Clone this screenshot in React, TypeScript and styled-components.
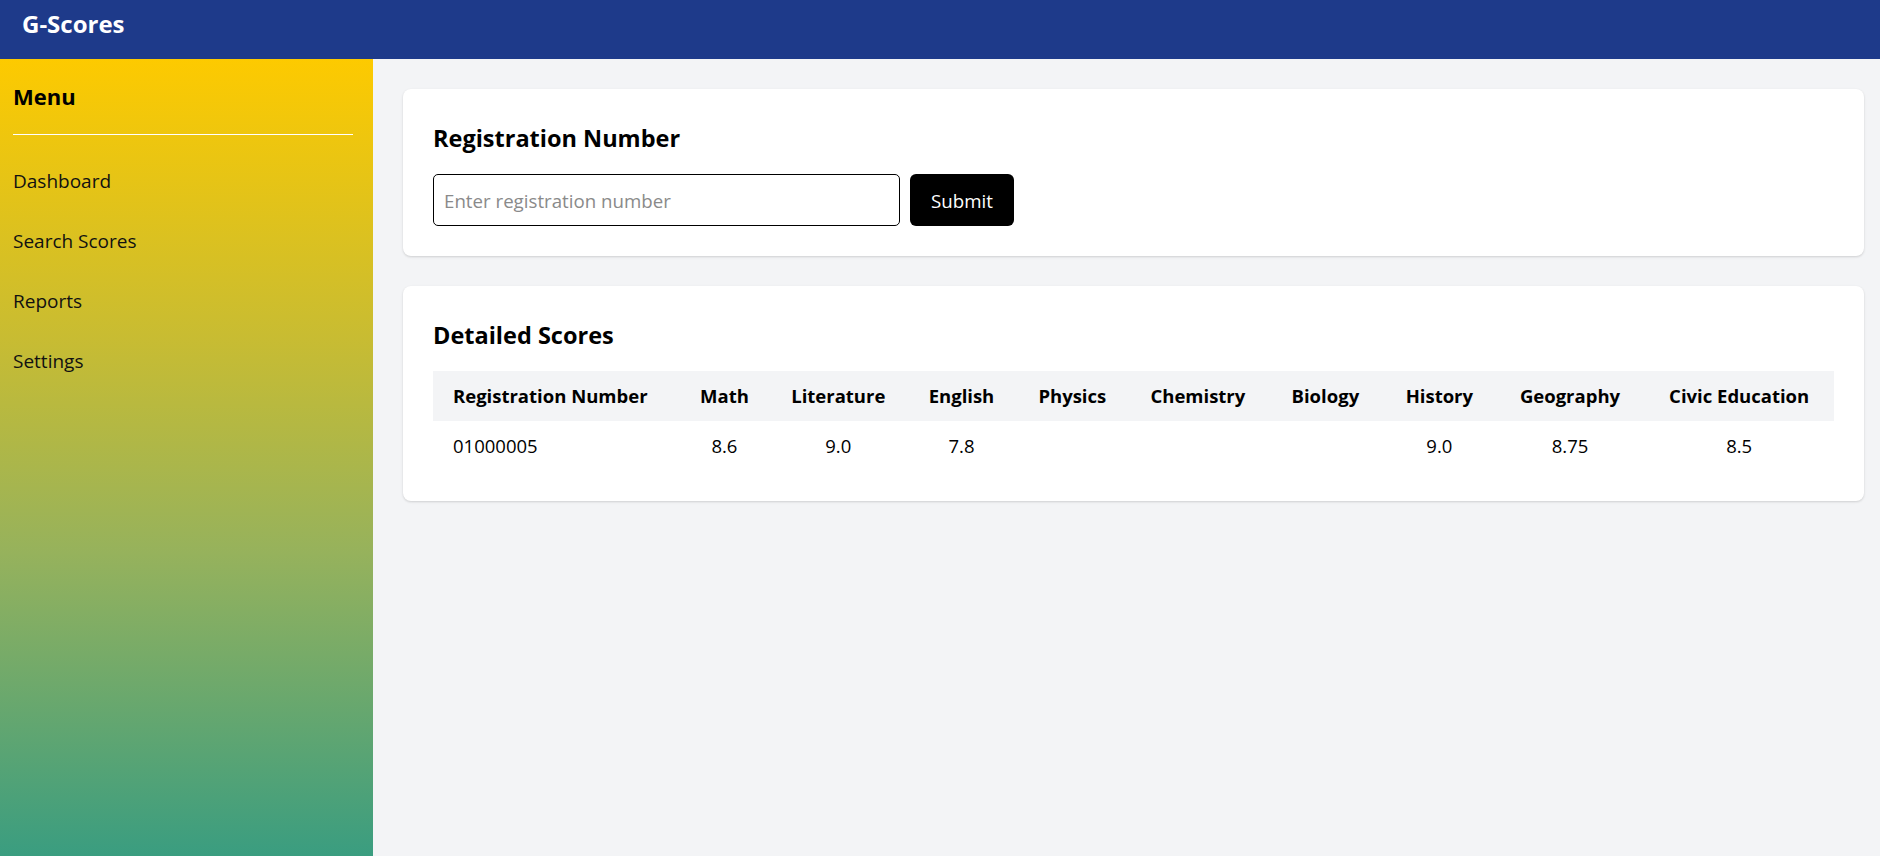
import React from "react";
import styled, { createGlobalStyle } from "styled-components";

const GlobalStyle = createGlobalStyle`
  *, *::before, *::after { box-sizing: border-box; }
  html, body { margin: 0; padding: 0; }
  body {
    font-family: "Open Sans", "Noto Sans", sans-serif;
    color: #000;
    background: #f3f4f6;
  }
`;

const Shell = styled.div`
  display: flex;
  flex-direction: column;
  min-height: 100vh;
`;

const TopBar = styled.header`
  height: 59px;
  flex-shrink: 0;
  background: #1e3a8a;
  padding: 6px 22px 0;
`;

const Brand = styled.h1`
  margin: 0;
  font-size: 24px;
  line-height: 35px;
  font-weight: 700;
  color: #fff;
`;

const Body = styled.div`
  flex: 1;
  display: flex;
`;

const Sidebar = styled.aside`
  width: 373px;
  flex-shrink: 0;
  background: linear-gradient(
    180deg,
    #fdca00 0%,
    rgb(200, 188, 50) 35%,
    rgb(150, 178, 92) 62%,
    #3a9d80 100%
  );
  padding: 20px 20px 20px 13px;
`;

const MenuTitle = styled.h2`
  margin: 0;
  font-size: 22px;
  line-height: 35px;
  font-weight: 700;
`;

const Divider = styled.hr`
  border: none;
  border-top: 1px solid #fff;
  height: 0;
  margin: 20px 0 16px;
`;

const NavList = styled.ul`
  list-style: none;
  margin: 0;
  padding: 0;
`;

const NavItem = styled.li`
  font-size: 19px;
  line-height: 30px;
  padding: 15px 0;
  color: #111;
  cursor: pointer;
`;

const Main = styled.main`
  flex: 1;
  display: flex;
  flex-direction: column;
  gap: 30px;
  padding: 30px 16px 30px 30px;
`;

const Card = styled.section`
  background: #fff;
  border-radius: 8px;
  box-shadow: 0 1px 3px rgba(0, 0, 0, 0.1), 0 1px 2px rgba(0, 0, 0, 0.06);
  padding: 30px;
`;

const CardTitle = styled.h2`
  margin: 0 0 18px;
  padding-top: 2px;
  font-size: 23.5px;
  line-height: 35px;
  font-weight: 700;
`;

const Form = styled.form`
  display: flex;
  gap: 10px;
`;

const Input = styled.input`
  width: 467px;
  height: 52px;
  border: 1px solid #000;
  border-radius: 5px;
  padding: 0 10px;
  font-family: inherit;
  font-size: 18.7px;
  color: #000;
  outline: none;
  &::placeholder {
    color: #8a8a8a;
  }
`;

const SubmitButton = styled.button`
  height: 52px;
  padding: 0 21px;
  background: #000;
  color: #fff;
  border: none;
  border-radius: 6px;
  font-family: inherit;
  font-size: 18.7px;
  cursor: pointer;
`;

const Table = styled.table`
  width: 100%;
  border-collapse: collapse;
  table-layout: fixed;
`;

const Col = styled.col<{ $w: number }>`
  width: ${(p) => p.$w}%;
`;

const HeadRow = styled.tr`
  background: #f3f4f6;
`;

const Th = styled.th<{ $align: "left" | "center" }>`
  padding: 10px 20px;
  font-size: 18.5px;
  line-height: 30px;
  font-weight: 700;
  text-align: ${(p) => p.$align};
  white-space: nowrap;
`;

const Td = styled.td<{ $align: "left" | "center" }>`
  padding: 10px 20px;
  font-size: 18.5px;
  line-height: 30px;
  font-weight: 400;
  text-align: ${(p) => p.$align};
  white-space: nowrap;
`;

const columns = [
  { label: "Registration Number", w: 245.7 },
  { label: "Math", w: 91.5 },
  { label: "Literature", w: 136.2 },
  { label: "English", w: 110.2 },
  { label: "Physics", w: 111.5 },
  { label: "Chemistry", w: 139.6 },
  { label: "Biology", w: 115.4 },
  { label: "History", w: 112.6 },
  { label: "Geography", w: 148.7 },
  { label: "Civic Education", w: 189.6 },
];
const total = columns.reduce((s, c) => s + c.w, 0);

const row = ["01000005", "8.6", "9.0", "7.8", "", "", "", "9.0", "8.75", "8.5"];

const menu = ["Dashboard", "Search Scores", "Reports", "Settings"];

export default function App() {
  return (
    <>
      <GlobalStyle />
      <Shell>
        <TopBar>
          <Brand>G-Scores</Brand>
        </TopBar>
        <Body>
          <Sidebar>
            <MenuTitle>Menu</MenuTitle>
            <Divider />
            <NavList>
              {menu.map((m) => (
                <NavItem key={m}>{m}</NavItem>
              ))}
            </NavList>
          </Sidebar>
          <Main>
            <Card>
              <CardTitle>Registration Number</CardTitle>
              <Form onSubmit={(e) => e.preventDefault()}>
                <Input type="text" placeholder="Enter registration number" />
                <SubmitButton type="submit">Submit</SubmitButton>
              </Form>
            </Card>
            <Card>
              <CardTitle>Detailed Scores</CardTitle>
              <Table>
                <colgroup>
                  {columns.map((c) => (
                    <Col key={c.label} $w={(c.w / total) * 100} />
                  ))}
                </colgroup>
                <thead>
                  <HeadRow>
                    {columns.map((c, i) => (
                      <Th key={c.label} $align={i === 0 ? "left" : "center"}>
                        {c.label}
                      </Th>
                    ))}
                  </HeadRow>
                </thead>
                <tbody>
                  <tr>
                    {row.map((v, i) => (
                      <Td key={i} $align={i === 0 ? "left" : "center"}>
                        {v}
                      </Td>
                    ))}
                  </tr>
                </tbody>
              </Table>
            </Card>
          </Main>
        </Body>
      </Shell>
    </>
  );
}
